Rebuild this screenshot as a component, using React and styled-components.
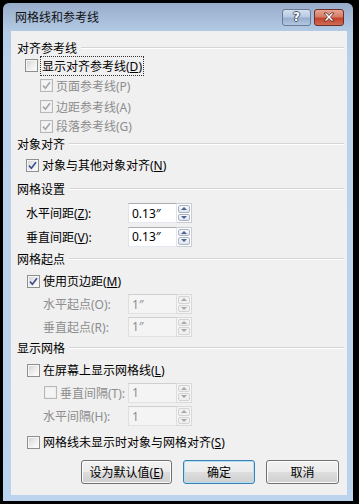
import React from 'react';
import styled, { createGlobalStyle, css } from 'styled-components';

const GlobalStyle = createGlobalStyle`
  html, body {
    margin: 0;
    padding: 0;
    background: #000;
  }
  body {
    font-family: "Noto Sans", "Noto Sans CJK SC", "Microsoft YaHei", sans-serif;
    font-size: 12px;
  }
`;

const Window = styled.div`
  margin: 3px 0 0 3px;
  width: 350px;
  height: 498px;
  display: flex;
  flex-direction: column;
  background: linear-gradient(to bottom, #97acc9 0, #b3cae5 28px, #bad1eb 60px, #bcd3ed 100%);
  border-radius: 6px 6px 0 0;
`;

const TitleBar = styled.div`
  height: 28px;
  display: flex;
  align-items: center;
  gap: 3px;
  padding: 0 9px 0 12px;
`;

const Title = styled.div`
  flex: 1;
  color: #111;
  font-size: 12px;
`;

const CaptionButton = styled.div`
  width: ${p => p.$w}px;
  height: 17px;
  box-sizing: border-box;
  border: 1px solid ${p => (p.$close ? '#6d2e27' : '#6a7b94')};
  border-radius: 3px;
  display: flex;
  align-items: center;
  justify-content: center;
  color: #fff;
  font-family: "DejaVu Sans", sans-serif;
  font-weight: bold;
  font-size: 12px;
  text-shadow: -1px 0 #44546d, 1px 0 #44546d, 0 -1px #44546d, 0 1px #44546d;
  background: ${p =>
    p.$close
      ? 'linear-gradient(to bottom, #e8a593 0%, #d47d67 45%, #c4432d 55%, #cf6b52 100%)'
      : 'linear-gradient(to bottom, #d4e0ef 0%, #b8c9e0 45%, #98aecd 55%, #b1c6e0 100%)'};
`;

const Content = styled.div`
  flex: 1;
  margin: 0 6px 6px 8px;
  padding-top: 9px;
  background: #f0f0f0;
  display: flex;
  flex-direction: column;
  color: #000;
`;

const Heading = styled.div`
  height: ${p => p.$h}px;
  display: flex;
  align-items: center;
  gap: 4px;
  padding: 0 3px 0 6px;
  &::after {
    content: "";
    flex: 1;
    border-top: 1px solid #d5d5d5;
    border-bottom: 1px solid #fff;
  }
`;

const CheckRow = styled.div`
  height: ${p => p.$h}px;
  display: flex;
  align-items: center;
  gap: 3px;
  padding-left: ${p => p.$indent}px;
  color: ${p => (p.$disabled ? '#8d8d8d' : '#000')};
`;

const Text = styled.span`
  white-space: nowrap;
  ${p =>
    p.$focus &&
    css`
      outline: 1px dotted #333;
      padding: 0 1px;
    `}
`;

const BoxFrame = styled.span`
  width: 13px;
  height: 13px;
  box-sizing: border-box;
  flex: none;
  display: flex;
  align-items: center;
  justify-content: center;
  border: 1px solid ${p => (p.$disabled ? '#b8b8b8' : '#8e8f8f')};
  background: ${p =>
    p.$disabled
      ? '#f4f4f4'
      : 'linear-gradient(135deg, #d2d2d2 0%, #ececec 50%, #ffffff 100%)'};
  box-shadow: inset 0 0 0 1px ${p => (p.$disabled ? '#ededed' : '#f6f6f6')};
`;

const Key = styled.span`
  text-decoration: underline;
`;

const SpinRow = styled.div`
  height: ${p => p.$h}px;
  display: grid;
  grid-template-columns: 117px auto;
  align-items: center;
  color: ${p => (p.$disabled ? '#8d8d8d' : '#000')};
`;

const SpinLabel = styled.div`
  display: flex;
  align-items: center;
  gap: 3px;
  padding-left: ${p => p.$indent}px;
`;

const Spin = styled.div`
  display: flex;
  height: 20px;
  width: 64px;
`;

const Field = styled.div`
  width: 49px;
  box-sizing: border-box;
  border: 1px solid;
  border-color: ${p =>
    p.$disabled ? '#cfcfcf #dedede #e2e2e2 #dedede' : '#abadb3 #e2e3ea #e3e9ef #e2e3ea'};
  background: ${p => (p.$disabled ? '#f4f4f4' : '#fff')};
  color: ${p => (p.$disabled ? '#8d8d8d' : '#000')};
  display: flex;
  align-items: center;
  padding-left: 3px;
`;

const Spinner = styled.div`
  flex: 1;
  box-sizing: border-box;
  border: 1px solid ${p => (p.$disabled ? '#dadada' : '#c8ccd3')};
  border-left: none;
  background: ${p => (p.$disabled ? '#f4f4f4' : '#fff')};
  display: flex;
  flex-direction: column;
  gap: 1px;
  padding: 1px;
`;

const SpinButton = styled.div`
  flex: 1;
  border: 1px solid ${p => (p.$disabled ? '#d4d4d4' : '#a9b4c6')};
  border-radius: 2px;
  background: ${p =>
    p.$disabled ? '#f0f0f0' : 'linear-gradient(to bottom, #f8f8f8, #e1e4ea)'};
  display: flex;
  align-items: center;
  justify-content: center;
  &::after {
    content: "";
    border-left: 3px solid transparent;
    border-right: 3px solid transparent;
    ${p =>
      p.$down
        ? css`border-top: 3px solid ${p.$disabled ? '#a8a8a8' : '#4a6592'};`
        : css`border-bottom: 3px solid ${p.$disabled ? '#a8a8a8' : '#4a6592'};`}
  }
`;

const ButtonRow = styled.div`
  margin-top: 4px;
  display: flex;
  justify-content: flex-end;
  gap: 11px;
  padding-right: 8px;
`;

const Button = styled.button`
  width: ${p => p.$w}px;
  height: 24px;
  padding: 0;
  font-family: inherit;
  font-size: 12px;
  color: #000;
  border: 1px solid ${p => (p.$focus ? '#3c7fb1' : '#707070')};
  border-radius: 3px;
  background: linear-gradient(to bottom, #f2f2f2 0%, #ebebeb 50%, #dddddd 51%, #cfcfcf 100%);
  box-shadow: inset 0 0 0 1px ${p => (p.$focus ? '#aee0f7' : '#fcfcfc')};
`;

const Check = ({ checked, disabled }) => (
  <BoxFrame $disabled={disabled}>
    {checked && (
      <svg width="9" height="9" viewBox="0 0 9 9">
        <path
          d="M1 4.6 L3.4 7.2 L8 1.2"
          fill="none"
          stroke={disabled ? '#a6a6a6' : '#3b4f8f'}
          strokeWidth="1.6"
        />
      </svg>
    )}
  </BoxFrame>
);

const SpinBox = ({ value, disabled }) => (
  <Spin>
    <Field $disabled={disabled}>{value}</Field>
    <Spinner $disabled={disabled}>
      <SpinButton $disabled={disabled} />
      <SpinButton $disabled={disabled} $down />
    </Spinner>
  </Spin>
);

export default function App() {
  return (
    <>
      <GlobalStyle />
      <Window>
        <TitleBar>
          <Title>网格线和参考线</Title>
          <CaptionButton $w={29}>?</CaptionButton>
          <CaptionButton $w={30} $close>
            <svg width="12" height="10" viewBox="0 0 12 10">
              <path
                d="M1 1 L4 1 L6 3.5 L8 1 L11 1 L7.6 5 L11 9 L8 9 L6 6.5 L4 9 L1 9 L4.4 5 Z"
                fill="#fff"
                stroke="#5a2a24"
                strokeWidth="0.8"
              />
            </svg>
          </CaptionButton>
        </TitleBar>
        <Content>
          <Heading $h={16}>对齐参考线</Heading>
          <CheckRow $h={19} $indent={14}>
            <Check />
            <Text $focus>显示对齐参考线(<Key>D</Key>)</Text>
          </CheckRow>
          <CheckRow $h={21} $indent={29} $disabled>
            <Check checked disabled />
            <Text>页面参考线(P)</Text>
          </CheckRow>
          <CheckRow $h={21} $indent={29} $disabled>
            <Check checked disabled />
            <Text>边距参考线(A)</Text>
          </CheckRow>
          <CheckRow $h={18} $indent={29} $disabled>
            <Check checked disabled />
            <Text>段落参考线(G)</Text>
          </CheckRow>

          <Heading $h={18}>对象对齐</Heading>
          <CheckRow $h={24} $indent={15}>
            <Check checked />
            <Text>对象与其他对象对齐(<Key>N</Key>)</Text>
          </CheckRow>

          <Heading $h={24}>网格设置</Heading>
          <SpinRow $h={24}>
            <SpinLabel $indent={15}>
              <Text>水平间距(<Key>Z</Key>):</Text>
            </SpinLabel>
            <SpinBox value="0.13″" />
          </SpinRow>
          <SpinRow $h={23}>
            <SpinLabel $indent={15}>
              <Text>垂直间距(<Key>V</Key>):</Text>
            </SpinLabel>
            <SpinBox value="0.13″" />
          </SpinRow>

          <Heading $h={22}>网格起点</Heading>
          <CheckRow $h={22} $indent={16}>
            <Check checked />
            <Text>使用页边距(<Key>M</Key>)</Text>
          </CheckRow>
          <SpinRow $h={24} $disabled>
            <SpinLabel $indent={32}>
              <Text>水平起点(O):</Text>
            </SpinLabel>
            <SpinBox value="1″" disabled />
          </SpinRow>
          <SpinRow $h={21} $disabled>
            <SpinLabel $indent={32}>
              <Text>垂直起点(R):</Text>
            </SpinLabel>
            <SpinBox value="1″" disabled />
          </SpinRow>

          <Heading $h={22}>显示网格</Heading>
          <CheckRow $h={22} $indent={16}>
            <Check />
            <Text>在屏幕上显示网格线(<Key>L</Key>)</Text>
          </CheckRow>
          <SpinRow $h={23} $disabled>
            <SpinLabel $indent={33}>
              <Check disabled />
              <Text>垂直间隔(T):</Text>
            </SpinLabel>
            <SpinBox value="1" disabled />
          </SpinRow>
          <SpinRow $h={24} $disabled>
            <SpinLabel $indent={32}>
              <Text>水平间隔(H):</Text>
            </SpinLabel>
            <SpinBox value="1" disabled />
          </SpinRow>
          <CheckRow $h={28} $indent={16}>
            <Check />
            <Text>网格线未显示时对象与网格对齐(<Key>S</Key>)</Text>
          </CheckRow>

          <ButtonRow>
            <Button $w={91}>设为默认值(<Key>E</Key>)</Button>
            <Button $w={72} $focus>确定</Button>
            <Button $w={73}>取消</Button>
          </ButtonRow>
        </Content>
      </Window>
    </>
  );
}
